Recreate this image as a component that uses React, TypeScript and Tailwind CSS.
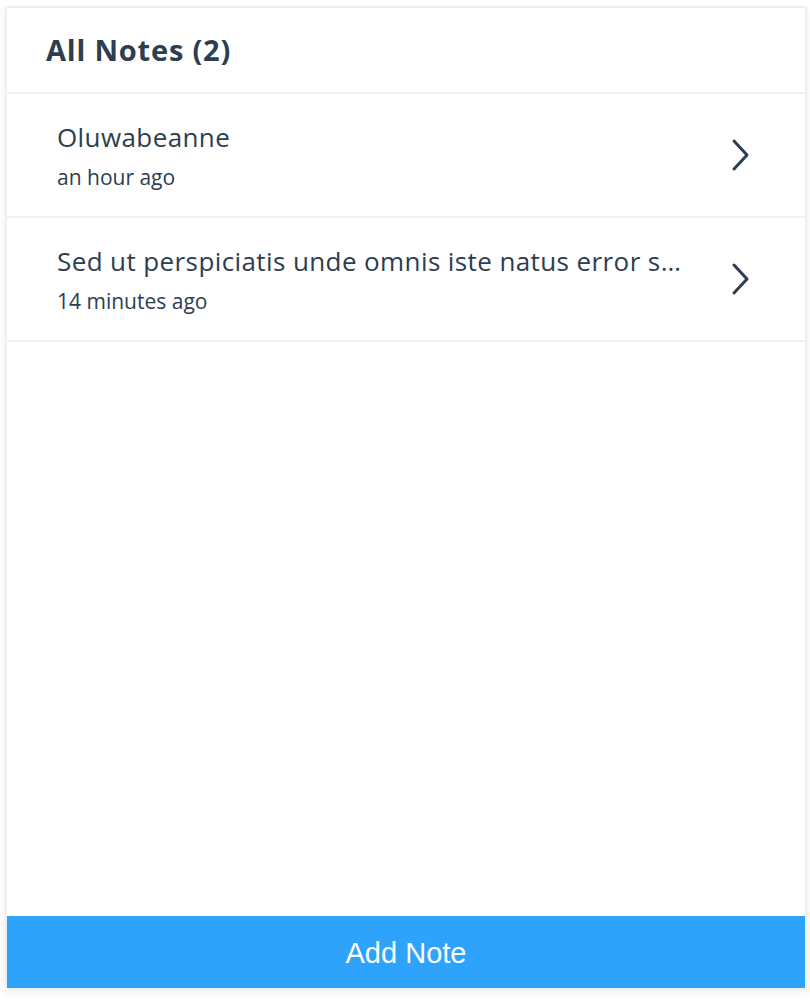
import React from "react";

const font = { fontFamily: "'Open Sans', 'Noto Sans', sans-serif" };

function Chevron() {
  return (
    <svg width="20" height="34" viewBox="0 0 20 34" fill="none" className="shrink-0">
      <path d="M3 3 L16 17 L3 31" stroke="#2c3e50" strokeWidth="3" strokeLinecap="round" strokeLinejoin="round" />
    </svg>
  );
}

function Row({ title, time }: { title: string; time: string }) {
  return (
    <div className="flex h-[124px] items-center border-b-2 border-[#efefef] pl-[50px] pr-[54px]">
      <div className="min-w-0 flex-1 pr-[46px]">
        <div className="truncate text-[26px] leading-[36px] tracking-[0.4px] text-[#2c3e50]">{title}</div>
        <div className="mt-[8px] text-[21px] leading-[28px] text-[#2c3e50]">{time}</div>
      </div>
      <Chevron />
    </div>
  );
}

export default function App() {
  return (
    <div className="h-[1006px] w-[810px] bg-white pl-[5px] pt-[6px]" style={font}>
      <div className="flex h-[982px] w-[802px] flex-col border-2 border-b-0 border-[#efefef] bg-white shadow-[0_4px_8px_rgba(0,0,0,0.08)]">
        <div className="flex h-[86px] items-center border-b-2 border-[#efefef] pl-[39px]">
          <h1 className="text-[29px] font-bold tracking-[0.8px] text-[#2c3e50]">All Notes (2)</h1>
        </div>
        <Row title="Oluwabeanne" time="an hour ago" />
        <Row title="Sed ut perspiciatis unde omnis iste natus error sit voluptatem accusantium doloremque" time="14 minutes ago" />
        <div className="flex-1" />
        <button
          className="flex h-[72px] w-full items-center justify-center bg-[#2ea3fc] pt-[3px] text-[29px] text-white"
          style={{ fontFamily: "'Liberation Sans', Arial, sans-serif" }}
        >
          Add Note
        </button>
      </div>
    </div>
  );
}
